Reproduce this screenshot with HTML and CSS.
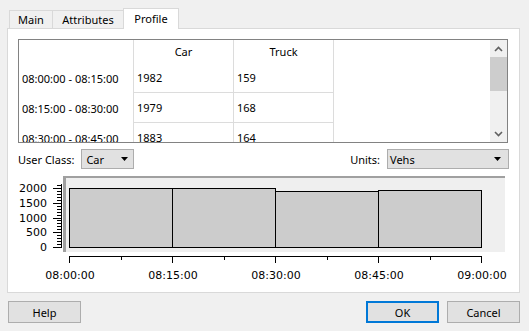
FILE: index.html
```html
<!DOCTYPE html>
<html>
  <head>
    <title>Profile</title>
    <link rel="stylesheet" href="styles.css">
  </head>
  <body>
    <div class="tabs">
      <div class="tab tab-main">Main</div>
      <div class="tab tab-attr">Attributes</div>
      <div class="tab tab-profile active">Profile</div>
    </div>

    <section class="panel">
      <div class="table-box">
        <div class="grid">
          <div class="cell label"></div>
          <div class="cell head">Car</div>
          <div class="cell head">Truck</div>
          <div class="cell"></div>

          <div class="cell label">08:00:00 - 08:15:00</div>
          <div class="cell val">1982</div>
          <div class="cell val">159</div>
          <div class="cell"></div>

          <div class="cell label">08:15:00 - 08:30:00</div>
          <div class="cell val">1979</div>
          <div class="cell val">168</div>
          <div class="cell"></div>

          <div class="cell label">08:30:00 - 08:45:00</div>
          <div class="cell val">1883</div>
          <div class="cell val">164</div>
          <div class="cell"></div>
        </div>
        <div class="scrollbar">
          <div class="sb-btn">
            <svg width="9" height="6"><path d="M1 5L4.5 1.5L8 5" stroke="#606060" stroke-width="1.6" fill="none"/></svg>
          </div>
          <div class="sb-thumb"></div>
          <div class="sb-track"></div>
          <div class="sb-btn">
            <svg width="9" height="6"><path d="M1 1L4.5 4.5L8 1" stroke="#606060" stroke-width="1.6" fill="none"/></svg>
          </div>
        </div>
      </div>

      <div class="controls">
        <span>User Class:</span>
        <div class="combo combo-class">
          <span>Car</span>
          <svg width="7" height="4"><path d="M0 0H7L3.5 4Z"/></svg>
        </div>
        <span class="units-label">Units:</span>
        <div class="combo combo-units">
          <span>Vehs</span>
          <svg width="7" height="4"><path d="M0 0H7L3.5 4Z"/></svg>
        </div>
      </div>

      <svg class="chart" width="490" height="120">
        <!-- plot frame -->
        <rect x="45" y="5" width="442" height="76" fill="#efefef"/>
        <rect x="45" y="5" width="442" height="2" fill="#a0a0a0"/>
        <rect x="45" y="5" width="3" height="76" fill="#a0a0a0"/>

        <!-- bars, one per 15 minutes -->
        <g fill="#cccccc" stroke="#000" stroke-width="1">
          <rect x="51.5" y="17.5" width="103" height="59"/>
          <rect x="154.5" y="17.5" width="103" height="59"/>
          <rect x="257.5" y="20.5" width="103" height="56"/>
          <rect x="360.5" y="19.5" width="103" height="57"/>
        </g>

        <!-- y axis -->
        <g stroke="#000" stroke-width="1" shape-rendering="crispEdges">
          <path d="M43.5 13V77"/>
          <path d="M39 14.5H43M39 20.5H43M39 23.5H43M39 26.5H43M39 29.5H43M39 35.5H43M39 38.5H43M39 41.5H43M39 44.5H43M39 49.5H43M39 52.5H43M39 55.5H43M39 58.5H43M39 64.5H43M39 67.5H43M39 70.5H43M39 73.5H43"/>
          <path d="M35 17.5H43M35 32.5H43M35 47.5H43M35 61.5H43M35 76.5H43"/>
        </g>
        <g class="axis-text" text-anchor="end">
          <text x="29" y="21">2000</text>
          <text x="29" y="36">1500</text>
          <text x="29" y="51">1000</text>
          <text x="29" y="65">500</text>
          <text x="29" y="80">0</text>
        </g>

        <!-- x axis -->
        <g stroke="#000" stroke-width="1" shape-rendering="crispEdges">
          <path d="M51 85.5H464"/>
          <path d="M51.5 85V92M154.5 85V92M257.5 85V92M360.5 85V92M463.5 85V92"/>
          <path d="M103.5 85V89M206.5 85V89M309.5 85V89M412.5 85V89"/>
        </g>
        <g class="axis-text" text-anchor="middle">
          <text x="52" y="108">08:00:00</text>
          <text x="155" y="108">08:15:00</text>
          <text x="258" y="108">08:30:00</text>
          <text x="361" y="108">08:45:00</text>
          <text x="464" y="108">09:00:00</text>
        </g>
      </svg>
    </section>

    <div class="buttons">
      <button class="btn">Help</button>
      <button class="btn default ok">OK</button>
      <button class="btn cancel">Cancel</button>
    </div>
  </body>
</html>
```

FILE: styles.css
```css
body {
    margin: 0;
    width: 529px;
    height: 331px;
    overflow: hidden;
    background: #f0f0f0;
    font-family: "Noto Sans", sans-serif;
    font-size: 11px;
    color: #000;
}

.tabs {
    display: flex;
    align-items: flex-end;
    height: 28px;
    margin-left: 9px;
}
.tab {
    box-sizing: border-box;
    height: 18px;
    margin-left: -1px;
    border: 1px solid #d9d9d9;
    border-bottom: none;
    background: #f0f0f0;
    text-align: center;
    line-height: 17px;
}
.tab-main {
    width: 44px;
    margin-left: 0;
}
.tab-attr {
    width: 72px;
}
.tab-profile {
    width: 56px;
}
.tab.active {
    position: relative;
    z-index: 1;
    height: 21px;
    margin-bottom: -1px;
    background: #fff;
    line-height: 19px;
}

.panel {
    box-sizing: border-box;
    width: 513px;
    height: 265px;
    margin-left: 7px;
    padding: 10px 11px 0 10px;
    border: 1px solid #d9d9d9;
    background: #fff;
}

.table-box {
    box-sizing: border-box;
    display: flex;
    height: 104px;
    border: 1px solid #828282;
}
.grid {
    flex: 1;
    display: grid;
    grid-template-columns: 115px 100px 100px 1fr;
    grid-template-rows: 23px 30px 30px 30px;
    overflow: hidden;
}
.cell {
    box-sizing: border-box;
    display: flex;
    align-items: center;
    padding-left: 3px;
    white-space: nowrap;
}
.cell.label {
    border-right: 1px solid #dcdcdc;
}
.cell.head {
    justify-content: center;
    padding-left: 0;
    border-right: 1px solid #dcdcdc;
}
.cell.val {
    border-right: 1px solid #dcdcdc;
    border-bottom: 1px solid #dcdcdc;
}

.scrollbar {
    display: flex;
    flex-direction: column;
    width: 17px;
    background: #f0f0f0;
}
.sb-btn {
    display: flex;
    align-items: center;
    justify-content: center;
    height: 17px;
}
.sb-thumb {
    height: 34px;
    background: #cdcdcd;
}
.sb-track {
    flex: 1;
}

.controls {
    display: flex;
    align-items: center;
    height: 20px;
    margin-top: 6px;
    margin-right: -1px;
}
.combo {
    box-sizing: border-box;
    display: flex;
    align-items: center;
    justify-content: space-between;
    height: 20px;
    margin-left: 7px;
    border: 1px solid #adadad;
    background: #e1e1e1;
}
.combo-class {
    width: 53px;
    padding: 0 5px 0 4px;
}
.combo-units {
    width: 122px;
    padding: 0 7px 0 2px;
}
.units-label {
    margin-left: auto;
}

.chart {
    display: block;
    margin-top: 2px;
}
.axis-text {
    font-family: "DejaVu Sans", sans-serif;
    font-size: 11px;
    fill: #000;
}

.buttons {
    display: flex;
    margin-top: 8px;
    padding: 0 9px 0 8px;
}
.btn {
    box-sizing: border-box;
    width: 73px;
    height: 22px;
    padding: 0;
    border: 1px solid #adadad;
    background: #e1e1e1;
    font-family: "Noto Sans", sans-serif;
    font-size: 11px;
    color: #000;
}
.btn.default {
    border: 2px solid #0078d7;
}
.ok {
    margin-left: auto;
}
.cancel {
    margin-left: 8px;
}
```
